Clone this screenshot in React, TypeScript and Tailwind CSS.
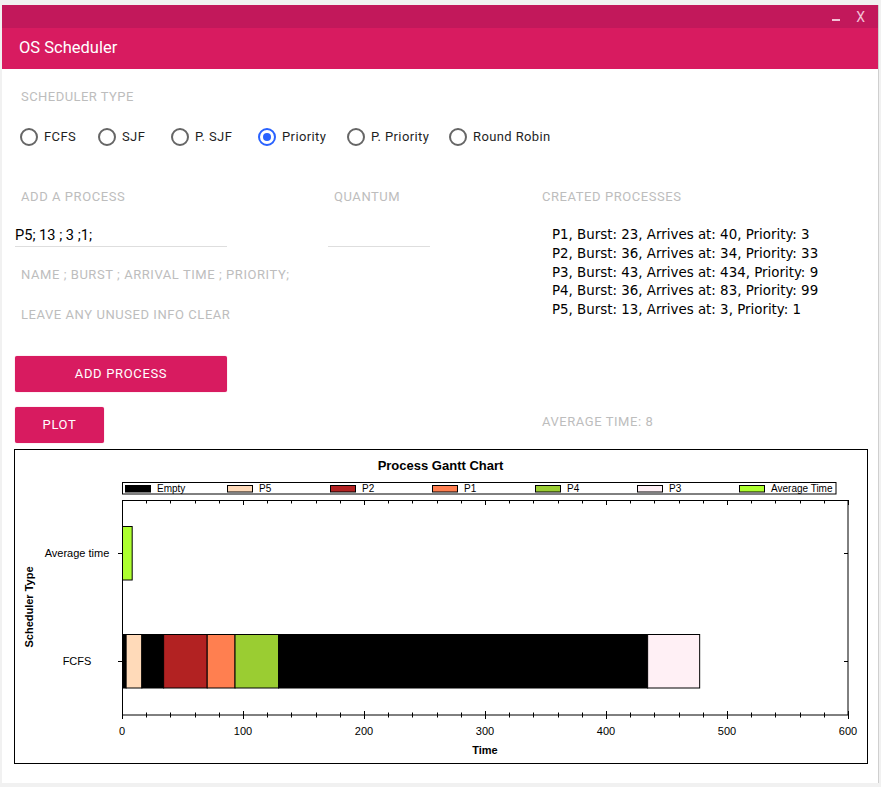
import React from 'react';

const X0 = 122;
const PX = 1.21;
const xs = (v: number) => X0 + v * PX;

const segments: [number, number, string][] = [
    [0, 3, '#000000'],
    [3, 16, '#ffdab9'],
    [16, 34, '#000000'],
    [34, 70, '#b22222'],
    [70, 93, '#ff7f50'],
    [93, 129, '#9acd32'],
    [129, 434, '#000000'],
    [434, 477, '#fff0f5'],
];

const legend: [string, string][] = [
    ['Empty', '#000000'],
    ['P5', '#ffdab9'],
    ['P2', '#b22222'],
    ['P1', '#ff7f50'],
    ['P4', '#9acd32'],
    ['P3', '#fff0f5'],
    ['Average Time', '#adff2f'],
];

// label + width of the slot each radio takes in the row
const radios: { label: string; w: string }[] = [
    { label: 'FCFS', w: 'w-[78px]' },
    { label: 'SJF', w: 'w-[73px]' },
    { label: 'P. SJF', w: 'w-[87px]' },
    { label: 'Priority', w: 'w-[89px]' },
    { label: 'P. Priority', w: 'w-[102px]' },
    { label: 'Round Robin', w: 'w-[110px]' },
];

const processes = [
    'P1, Burst: 23, Arrives at: 40, Priority: 3',
    'P2, Burst: 36, Arrives at: 34, Priority: 33',
    'P3, Burst: 43, Arrives at: 434, Priority: 9',
    'P4, Burst: 36, Arrives at: 83, Priority: 99',
    'P5, Burst: 13, Arrives at: 3, Priority: 1',
];

const GanttChart: React.FC = () => {
    const ticks: number[] = [];
    for (let v = 0; v <= 600; v += 20) ticks.push(v);

    return (
        <svg width={852} height={313} viewBox="15 450 852 313" className="block" fontFamily="'Liberation Sans', Arial, sans-serif">
            {/* Title */}
            <text x={440.5} y={470} textAnchor="middle" fontSize={13} fontWeight="bold" fill="#000">
                Process Gantt Chart
            </text>

            {/* Legend */}
            <rect x={122.5} y={482.5} width={713.5} height={11.5} fill="#fff" stroke="#000" strokeWidth={1} />
            {legend.map(([name, color], i) => {
                const lx = 125 + i * 102.4;
                return (
                    <g key={name}>
                        <rect x={Math.round(lx) + 0.5} y={485.5} width={25} height={6.5} fill={color} stroke="#000" strokeWidth={1} />
                        <text x={Math.round(lx) + 32} y={491.5} fontSize={10} fill="#000">{name}</text>
                    </g>
                );
            })}

            {/* Plot box */}
            <rect x={122.5} y={500.5} width={725.5} height={214.5} fill="#fff" stroke="#000" strokeWidth={1} />

            {/* Ticks */}
            {ticks.map((v) => {
                const major = v % 100 === 0;
                const x = Math.round(xs(v)) + 0.5;
                return (
                    <g key={v}>
                        <line x1={x} x2={x} y1={major ? 711 : 712.5} y2={major ? 719 : 717.5} stroke="#000" strokeWidth={1} />
                        <line x1={x} x2={x} y1={500} y2={major ? 505 : 503.5} stroke="#000" strokeWidth={1} />
                        {major && (
                            <text x={xs(v)} y={735} textAnchor="middle" fontSize={11} fill="#000">{v}</text>
                        )}
                    </g>
                );
            })}

            {/* Category ticks */}
            {[553.5, 661.5].map((y) => (
                <g key={y}>
                    <line x1={118} x2={127} y1={y} y2={y} stroke="#000" strokeWidth={1} />
                    <line x1={844} x2={848} y1={y} y2={y} stroke="#000" strokeWidth={1} />
                </g>
            ))}

            {/* Category labels */}
            <text x={77} y={557} textAnchor="middle" fontSize={11} fill="#000">Average time</text>
            <text x={77} y={664.5} textAnchor="middle" fontSize={11} fill="#000">FCFS</text>

            {/* Axis titles */}
            <text x={485} y={754} textAnchor="middle" fontSize={11} fontWeight="bold" fill="#000">Time</text>
            <text
                x={29}
                y={607}
                textAnchor="middle"
                dominantBaseline="central"
                fontSize={11}
                fontWeight="bold"
                fill="#000"
                transform="rotate(-90 29 607)"
            >
                Scheduler Type
            </text>

            {/* Bars */}
            <rect x={122.5} y={526.5} width={xs(8) - 122} height={53.5} fill="#adff2f" stroke="#000" strokeWidth={1} />
            {segments.map(([a, b, color]) => (
                <rect
                    key={a}
                    x={xs(a) + 0.5}
                    y={634.5}
                    width={xs(b) - xs(a)}
                    height={53.5}
                    fill={color}
                    stroke="#000"
                    strokeWidth={1}
                />
            ))}
        </svg>
    );
};

const Radio: React.FC<{ label: string; w: string; checked?: boolean }> = ({ label, w, checked }) => (
    <label className={`flex items-center gap-[6px] shrink-0 ${w}`}>
        {checked ? (
            <span className="w-[18px] h-[18px] rounded-full border-2 border-[#2962ff] flex items-center justify-center">
                <span className="w-[8px] h-[8px] rounded-full bg-[#2962ff]" />
            </span>
        ) : (
            <span className="w-[18px] h-[18px] rounded-full border-2 border-[#666666]" />
        )}
        <span className="text-[13px] leading-[16px] tracking-[0.03em] text-[#1f1f1f] whitespace-nowrap">{label}</span>
    </label>
);

const App: React.FC = () => {
    return (
        <div className="w-[881px] h-[787px] bg-[#f1f1f1] overflow-hidden" style={{ fontFamily: 'Roboto, "Liberation Sans", sans-serif' }}>
            <div className="h-[5px]" />
            <div className="ml-[2px] w-[877px] border-r border-[#cfcfcf]">
                {/* Title bar */}
                <div className="h-[23px] bg-[#c2185b] flex items-center justify-end pr-[13px] gap-[16px] text-[#f3c1d6]">
                    <span className="w-[8px] h-[2px] bg-[#f3c1d6] mt-[7px]" />
                    <span className="text-[14px] leading-[14px]">X</span>
                </div>

                {/* Header */}
                <div className="h-[41px] bg-[#d81b60] flex items-center pl-[17px]">
                    <span className="text-white text-[16.5px] leading-[20px] mt-[-2px]">OS Scheduler</span>
                </div>

                {/* Body */}
                <div className="h-[714px] bg-white">
                    <div className="pt-[20px] pl-[19px] text-[13px] leading-[16px] tracking-[0.035em] text-[#bdbdbd]">SCHEDULER TYPE</div>

                    <div className="mt-[22px] pl-[18px] flex items-center h-[20px]">
                        {radios.map((r) => (
                            <Radio key={r.label} label={r.label} w={r.w} checked={r.label === 'Priority'} />
                        ))}
                    </div>

                    <div className="mt-[42px] pl-[13px] grid grid-cols-[313px_208px_1fr] tracking-[0.035em]">
                        {/* Add a process */}
                        <div className="flex flex-col">
                            <div className="pl-[6px] text-[13px] leading-[16px] text-[#bdbdbd]">ADD A PROCESS</div>
                            <div className="mt-[16px] w-[212px] h-[26px] pt-[6px] border-b border-[#dedede] text-[14.6px] leading-[16px] tracking-normal text-black">
                                P5; 13 ; 3 ;1;
                            </div>
                            <div className="mt-[20px] pl-[6px] text-[13px] leading-[16px] text-[#bdbdbd] whitespace-nowrap">
                                NAME ; BURST ; ARRIVAL TIME ; PRIORITY;
                            </div>
                            <div className="mt-[24px] pl-[6px] text-[13px] leading-[16px] text-[#bdbdbd]">
                                LEAVE ANY UNUSED INFO CLEAR
                            </div>
                            <button className="mt-[33px] w-[212px] h-[36px] bg-[#d81b60] rounded-[2px] text-white text-[13px] font-normal tracking-[0.05em] shadow-[0_0_1px_rgba(216,27,96,0.6)]">
                                ADD PROCESS
                            </button>
                        </div>

                        {/* Quantum */}
                        <div className="flex flex-col">
                            <div className="pl-[6px] text-[13px] leading-[16px] text-[#bdbdbd]">QUANTUM</div>
                            <div className="mt-[16px] w-[102px] h-[26px] border-b border-[#dedede]" />
                        </div>

                        {/* Created processes */}
                        <div className="flex flex-col">
                            <div className="pl-[6px] text-[13px] leading-[16px] text-[#bdbdbd]">CREATED PROCESSES</div>
                            <div
                                className="mt-[21px] pl-[16px] text-[13.4px] leading-[18.8px] tracking-normal text-black whitespace-nowrap"
                                style={{ fontFamily: '"Comic Sans MS", "DejaVu Sans", sans-serif' }}
                            >
                                {processes.map((p) => (
                                    <div key={p}>{p}</div>
                                ))}
                            </div>
                        </div>
                    </div>

                    <div className="mt-[15px] pl-[13px] grid grid-cols-[521px_1fr] items-start tracking-[0.035em]">
                        <button className="w-[89px] h-[36px] bg-[#d81b60] rounded-[2px] text-white text-[13px] font-normal tracking-[0.05em] shadow-[0_0_1px_rgba(216,27,96,0.6)]">
                            PLOT
                        </button>
                        <div className="pt-[7px] pl-[6px] text-[13px] leading-[16px] text-[#bdbdbd]">AVERAGE TIME: 8</div>
                    </div>

                    <div className="mt-[6px] ml-[12px] w-[854px] h-[315px] border border-black">
                        <GanttChart />
                    </div>
                </div>
            </div>
        </div>
    );
};

export default App;
